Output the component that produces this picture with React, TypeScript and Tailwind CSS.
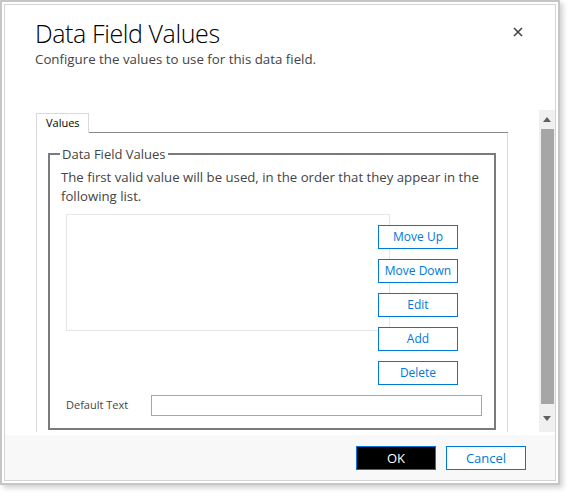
import React from 'react'

const FONT = "font-['Open_Sans','Noto_Sans',sans-serif]"

const SIDE_BUTTONS = ['Move Up', 'Move Down', 'Edit', 'Add', 'Delete']

function SideButton({ label }: { label: string }) {
  return (
    <button className="w-[80px] h-[24px] border border-[#0078d7] bg-white text-[12px] text-[#0078d7] leading-none">
      {label}
    </button>
  )
}

export default function App() {
  return (
    <div className={`w-[569px] h-[494px] bg-white ${FONT}`}>
      {/* Window frame */}
      <div className="w-[560px] h-[485px] border-2 border-[#c6c6c6] bg-white p-[2px] shadow-[3px_3px_5px_rgba(0,0,0,0.18)]">
        <div className="w-full h-full border border-[#d4d4d4] flex flex-col">
          {/* Header */}
          <div className="h-[105px] shrink-0 flex justify-between pl-[30px] pr-[31px] pt-[12px]">
            <div>
              <h1 className="text-[25px] font-light text-black leading-[32px] tracking-[-0.4px]">Data Field Values</h1>
              <p className="text-[13.3px] text-[#444] leading-[18px] mt-[1px]">
                Configure the values to use for this data field.
              </p>
            </div>
            <button className="mt-[9px] w-[12px] h-[12px] flex items-center justify-center text-[#444]">
              <svg width="10" height="10" viewBox="0 0 10 10">
                <path d="M1 1 L9 9 M9 1 L1 9" stroke="#444" strokeWidth="1.6" />
              </svg>
            </button>
          </div>

          {/* Scroll region */}
          <div className="h-[322px] shrink-0 flex">
            <div className="flex-1 pl-[31px] pt-[3px] overflow-hidden">
              {/* Tabs */}
              <div className="flex items-end">
                <div className="h-[20px] w-[53px] border border-b-0 border-[#d9d9d9] text-[11px] text-black pl-[9px] leading-[18px]">
                  Values
                </div>
                <div className="w-[419px] border-b border-[#8a8a8a]" />
              </div>
              {/* Tab panel */}
              <div className="w-[472px] h-[320px] border-x border-[#dcdcdc] pl-[11px] pt-[13px]">
                <fieldset className="w-[447px] h-[284px] border-2 border-[#7b7b7b] pl-[11px] pr-[12px] pt-0">
                  <legend className="text-[13px] text-[#444] px-[2px] -ml-[1px] leading-[16px]">Data Field Values</legend>
                  <p className="text-[13.2px] text-[#444] leading-[19px] mt-[6px]">
                    The first valid value will be used, in the order that they appear in the following list.
                  </p>
                  <div className="flex mt-[8px] ml-[5px]">
                    <div className="w-[324px] h-[117px] border border-[#e6e6e6] bg-white shrink-0" />
                    <div className="flex flex-col gap-[10px] -ml-[12px] mt-[11px]">
                      {SIDE_BUTTONS.map(b => (
                        <SideButton key={b} label={b} />
                      ))}
                    </div>
                  </div>
                  <div className="flex items-center mt-[10px] ml-[5px]">
                    <span className="w-[85px] text-[11px] text-[#444]">Default Text</span>
                    <input className="w-[331px] h-[21px] border border-[#a6a6a6] bg-white outline-none" />
                  </div>
                </fieldset>
              </div>
            </div>
            {/* Scrollbar */}
            <div className="w-[16px] shrink-0 bg-[#f0f0f0] flex flex-col items-center">
              <div className="h-[19px] flex items-center justify-center">
                <svg width="8" height="5" viewBox="0 0 8 5">
                  <path d="M0 5 L4 0 L8 5 Z" fill="#606060" />
                </svg>
              </div>
              <div className="w-[13px] h-[275px] bg-[#a6a6a6]" />
              <div className="flex-1 flex items-center justify-center">
                <svg width="8" height="5" viewBox="0 0 8 5">
                  <path d="M0 0 L8 0 L4 5 Z" fill="#606060" />
                </svg>
              </div>
            </div>
          </div>

          <div className="h-[3px] shrink-0" />

          {/* Footer */}
          <div className="flex-1 bg-[#f8f8f8] flex justify-end items-start gap-[10px] pt-[11px] pr-[29px]">
            <button className="w-[80px] h-[24px] bg-black border border-[#0078d7] text-white text-[13px] leading-none">
              OK
            </button>
            <button className="w-[80px] h-[24px] bg-white border border-[#0078d7] text-[#0078d7] text-[13px] leading-none">
              Cancel
            </button>
          </div>
        </div>
      </div>
    </div>
  )
}
